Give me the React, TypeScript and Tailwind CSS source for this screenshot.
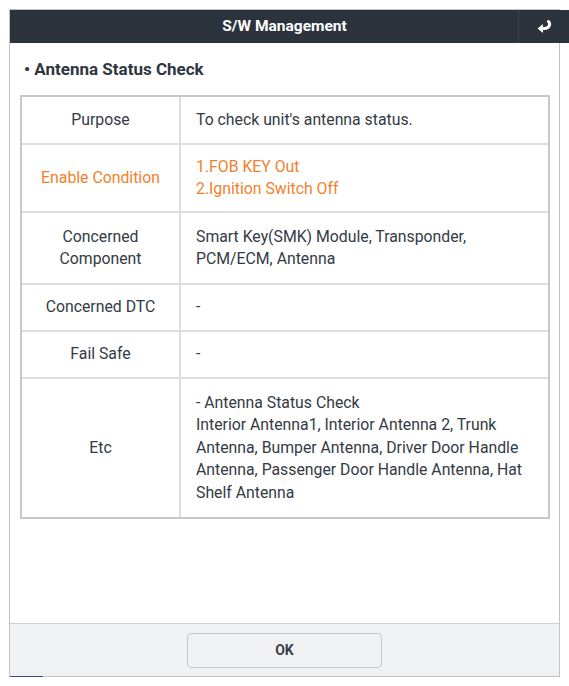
import React from "react";

const rows = [
  { label: "Purpose", h: "h-[48px]", value: ["To check unit's antenna status."] },
  { label: "Enable Condition", h: "h-[68px]", value: ["1.FOB KEY Out", "2.Ignition Switch Off"], orange: true },
  { label: "Concerned\nComponent", h: "h-[72px]", value: ["Smart Key(SMK) Module, Transponder,", "PCM/ECM, Antenna"] },
  { label: "Concerned DTC", h: "h-[47px]", value: ["-"] },
  { label: "Fail Safe", h: "h-[47px]", value: ["-"] },
  {
    label: "Etc",
    h: "h-[138px]",
    value: [
      "- Antenna Status Check",
      "Interior Antenna1, Interior Antenna 2, Trunk Antenna, Bumper Antenna, Driver Door Handle Antenna, Passenger Door Handle Antenna, Hat Shelf Antenna",
    ],
  },
];

const ReturnIcon = () => (
  <svg width="16" height="14" viewBox="0 0 16 14">
    <path d="M12.5 1.5 C14.5 3.5 14 8 9 8.5 L6 8.5" fill="none" stroke="#ffffff" strokeWidth="3" strokeLinecap="round" />
    <path d="M7 4 L1.5 8.5 L7 13 Z" fill="#ffffff" />
  </svg>
);

export default function App() {
  return (
    <div className="w-[569px] h-[686px] bg-white pt-[9px] pl-[9px] overflow-hidden font-['Roboto','Liberation_Sans',sans-serif] text-[#343a45]">
      <div className="relative w-[551px] h-[668px] border border-[#c3c3c3] flex flex-col">
        <div className="relative h-[33px] -mr-[10px] bg-[#2c333d] flex items-center justify-center pr-[10px]">
          <span className="text-white text-[15.5px] font-bold">S/W Management</span>
          <div className="absolute right-0 top-0 h-full w-[51px] border-l border-[#3a424d] flex items-center justify-center">
            <ReturnIcon />
          </div>
        </div>

        <div className="flex-1 bg-white pl-[10px] pr-[9px]">
          <div className="mt-[15px] pl-[4px] text-[17px] leading-[22px] font-bold text-[#2f3642]">• Antenna Status Check</div>
          <div className="mt-[15px] border-2 border-[#c8c8c8] text-[15.8px] leading-[22.5px]">
            {rows.map((r, i) => (
              <div key={i} className={`flex ${r.h} ${i < rows.length - 1 ? "border-b-2 border-[#dedede]" : ""}`}>
                <div
                  className={`w-[159px] shrink-0 border-r-2 border-[#dedede] flex items-center justify-center text-center whitespace-pre-line ${
                    r.orange ? "text-[#f27f2c]" : ""
                  }`}
                >
                  {r.label}
                </div>
                <div className={`flex-1 flex flex-col justify-center pl-[15px] pr-[12px] ${r.orange ? "text-[#f27f2c]" : ""}`}>
                  {r.value.map((v, j) => (
                    <div key={j}>{v}</div>
                  ))}
                </div>
              </div>
            ))}
          </div>
        </div>

        <div className="h-[53px] border-t border-[#cfcfcf] bg-[#f0f1f3] flex items-center justify-center">
          <button className="w-[195px] h-[35px] rounded-[4px] border border-[#c6c8cb] bg-[#f0f1f3] text-[14px] font-bold text-[#3a3f47]">
            OK
          </button>
        </div>
        <div className="absolute left-0 -bottom-[1px] w-[33px] h-[1px] bg-[#3d4a78]" />
      </div>
    </div>
  );
}
